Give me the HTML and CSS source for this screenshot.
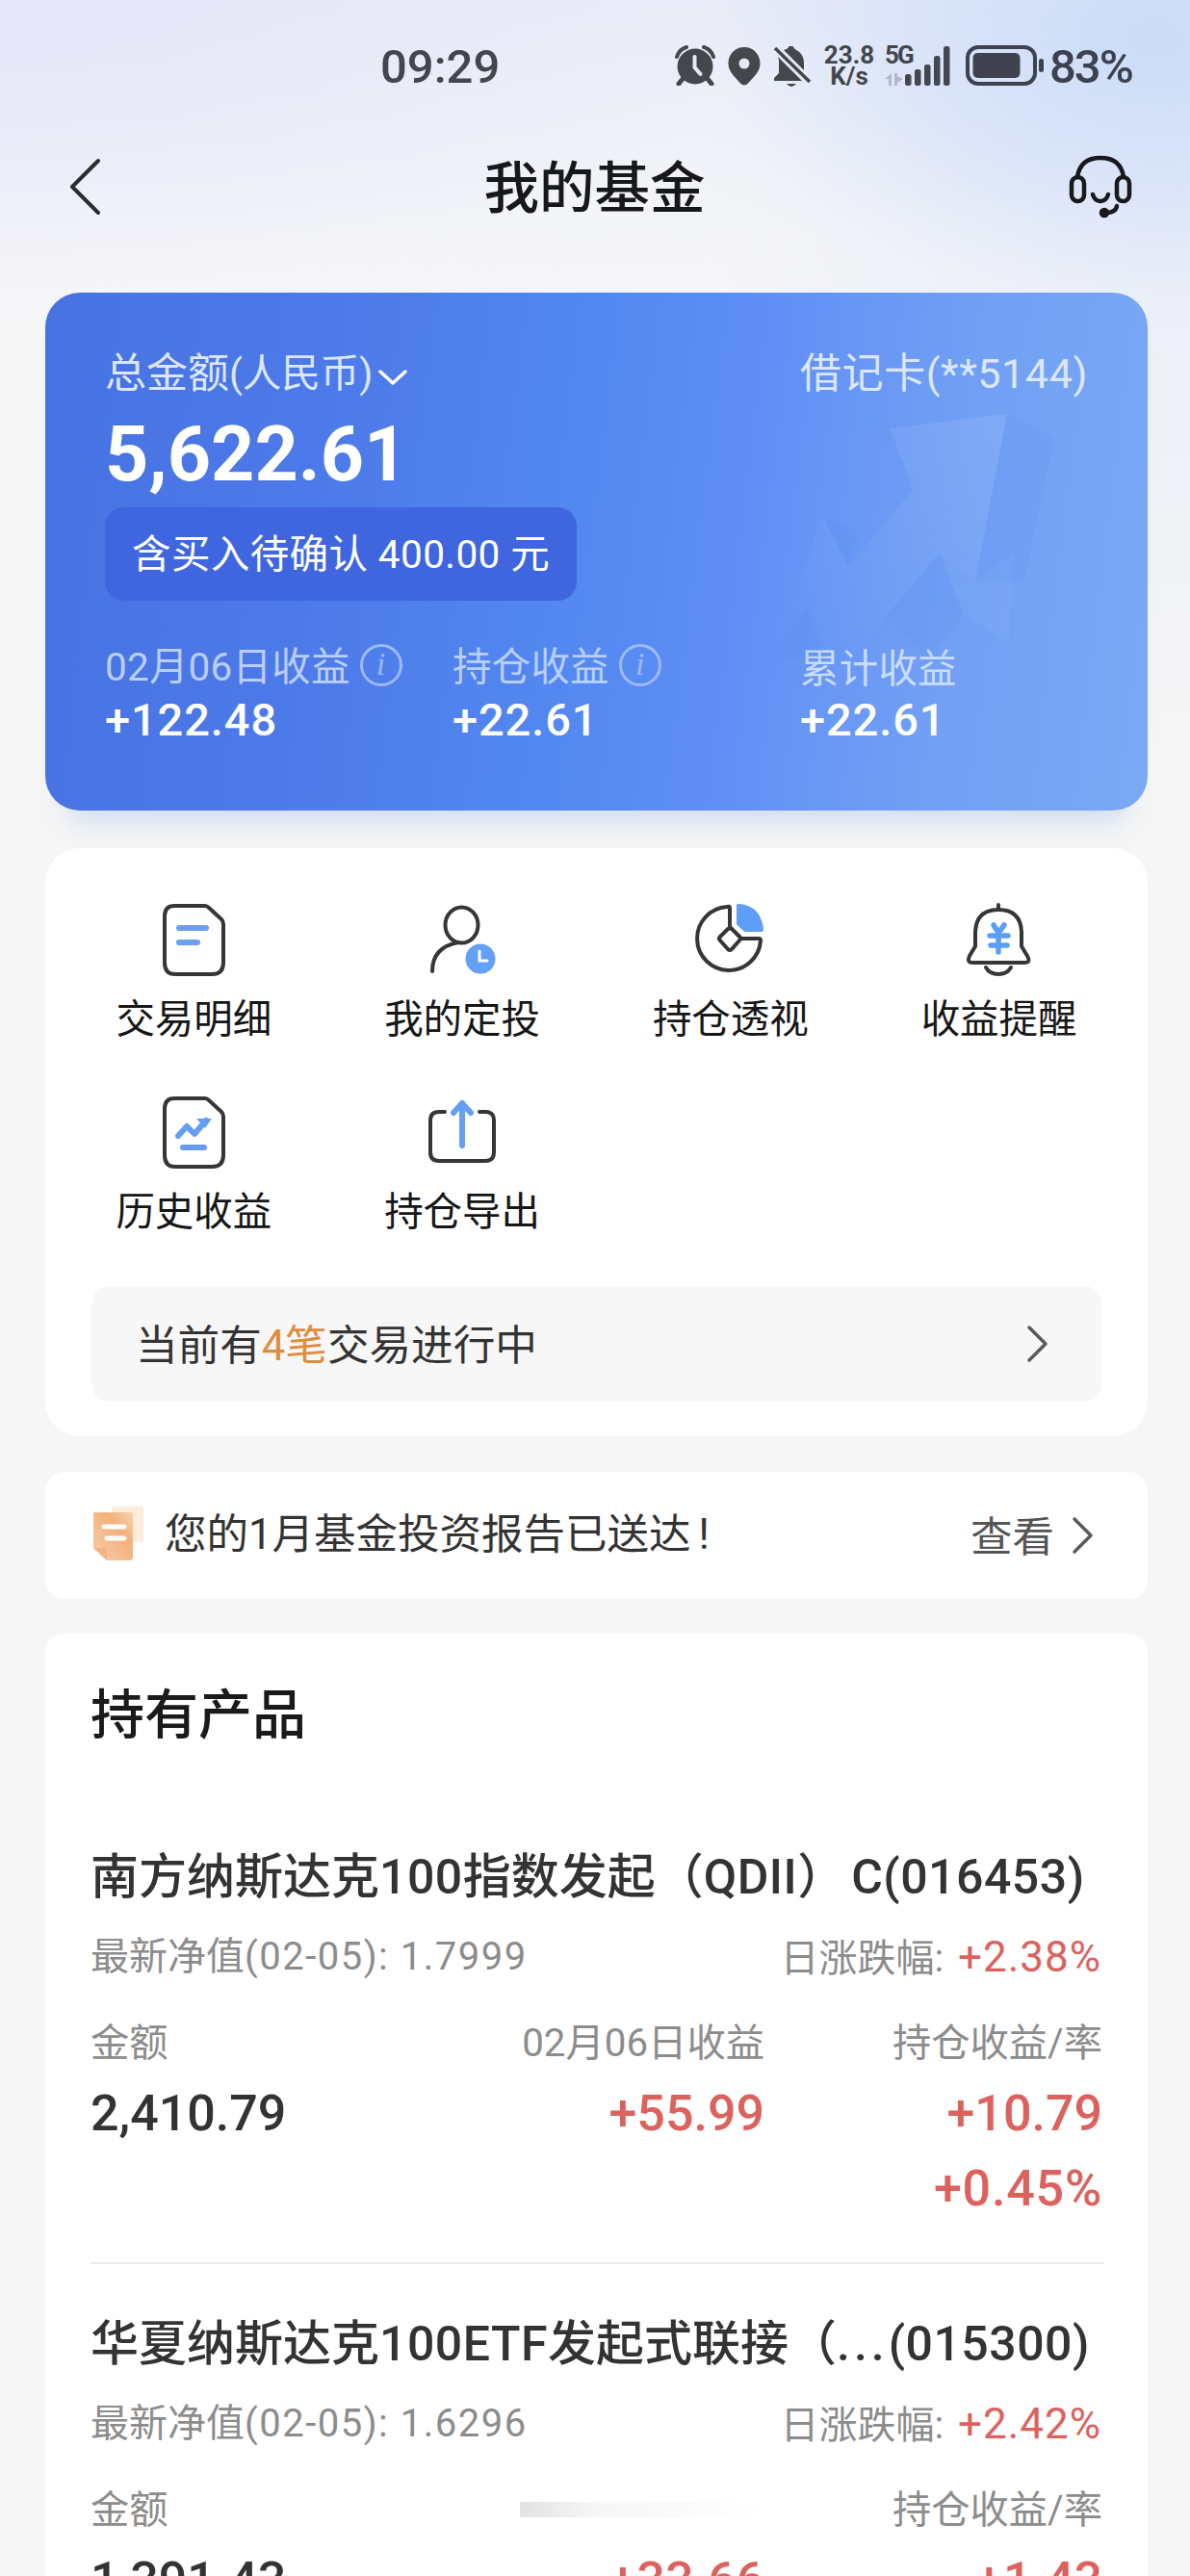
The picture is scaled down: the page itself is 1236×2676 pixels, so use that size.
FILE: index.html
```html
<!DOCTYPE html>
<html lang="zh-CN">
<head>
  <meta charset="UTF-8" />
  <meta name="viewport" content="width=device-width, initial-scale=1.0"/>
  <title>我的基金</title>
  <link rel="stylesheet" href="styles.css">
</head>
<body>
  <div class="status-bar">
    <span class="time">09:29</span>
    <div class="status-icons">
      <svg class="alarm" width="42" height="42" viewBox="0 0 42 42">
        <circle cx="21" cy="22" r="18.5" fill="#44474b"/>
        <path d="M2 12A15 15 0 0 1 12 2M30 2A15 15 0 0 1 40 12" fill="none" stroke="#44474b" stroke-width="4" stroke-linecap="round"/>
        <path d="M8 35l-4 5M34 35l4 5" stroke="#44474b" stroke-width="5" stroke-linecap="round"/>
        <path d="M20.5 12v11l6 7" fill="none" stroke="#e8ebf7" stroke-width="4" stroke-linecap="round"/>
      </svg>
      <svg class="pin" width="34" height="40" viewBox="0 0 34 40">
        <path d="M17 0C7.500 0 .5 7.500 .5 17c0 9 8 15 12.500 20.500q4 4 8 0C25.500 32 33.500 26 33.500 17 33.500 7.500 26.500 0 17 0z" fill="#44474b"/>
        <circle cx="17" cy="17" r="5.500" fill="#e4e9f7"/>
      </svg>
      <svg class="mute" width="40" height="44" viewBox="0 0 40 44">
        <path d="M14 4q2-1 2.500-3h4Q21 3 24 5c6 3 8 8 8 14v7L11 5zM5 12l25 25H1v-3l5-5V16zM14 40h10q-5 6-10 0z" fill="#44474b"/>
        <path d="M2 3l36 35" stroke="#44474b" stroke-width="3.500"/>
      </svg>
      <div class="speed"><span>23.8</span><span>K/s</span></div>
      <div class="signal">
        <span class="net">5G</span>
        <svg width="70" height="44" viewBox="0 0 70 44">
          <path d="M7 29v13H4v-7H0zM10 29v13h3v-3l6-4-6-3v-3z" fill="#b3b9c8"/>
          <g fill="#43474f">
            <rect x="21" y="30" width="6.500" height="12" rx="2.500"/>
            <rect x="31" y="25" width="6.500" height="17" rx="2.500"/>
            <rect x="41" y="20" width="6.500" height="22" rx="2.500"/>
            <rect x="51" y="11" width="6.500" height="31" rx="2.500"/>
            <rect x="61" y="1" width="6.500" height="41" rx="2.500"/>
          </g>
        </svg>
      </div>
      <svg class="battery" width="82" height="42" viewBox="0 0 82 42">
        <rect x="2" y="2" width="70" height="38" rx="11" fill="none" stroke="#3c4250" stroke-width="4"/>
        <rect x="7.500" y="8" width="49" height="26" rx="5" fill="#40434f"/>
        <rect x="76" y="14" width="5" height="14" rx="2.500" fill="#3c4250"/>
      </svg>
      <span class="percent">83%</span>
    </div>
  </div>

  <header>
    <svg width="34" height="60" viewBox="0 0 34 60"><path d="M31 3L4 30l27 27" fill="none" stroke="#2b2c2e" stroke-width="4" stroke-linecap="round" stroke-linejoin="round"/></svg>
    <h1>我的基金</h1>
    <svg width="66" height="66" viewBox="0 0 66 66" fill="none" stroke="#17191d" stroke-width="4.500" stroke-linecap="round">
      <path d="M9 23C11 9 20 3 33 3s22 6 24 20"/>
      <rect x="3" y="23" width="13" height="25" rx="6.500"/>
      <rect x="50" y="23" width="13" height="25" rx="6.500"/>
      <path d="M25 41q2 7 8 7t8-7M50 53q-1 7-12 7"/>
      <circle cx="37" cy="60" r="3" fill="#17191d"/>
    </svg>
  </header>

  <section class="asset-card">
    <svg class="watermark" width="1145" height="538" viewBox="0 0 1145 538">
      <defs>
        <linearGradient id="face" x1="1" y1="0" x2="0.200" y2="1">
          <stop offset="0" stop-color="#fff" stop-opacity=".1"/>
          <stop offset="1" stop-color="#fff" stop-opacity="0"/>
        </linearGradient>
      </defs>
      <path d="M877 141l122-15-33 174-37-30-55 66-40 50-43-58-30 43 46-139 27 52 68-80z" fill="url(#face)"/>
      <path d="M929 270l37 30 40-30-5 93-47-28z" fill="#fff" opacity=".04"/>
      <path d="M999 126l49 25-32 150-50-1zM808 232l38 18-12 34zM929 270l25 65-36 45-45-44zM791 328l20 54-55-3z" fill="#4b80ea" opacity=".09"/>
    </svg>
    <div class="asset-top">
      <span class="asset-title">总金额<small>(人民币)</small>
        <svg width="32" height="20" viewBox="0 0 32 20"><path d="M3 4l13 12L29 4" fill="none" stroke="#fff" stroke-width="3.500" stroke-linecap="round" stroke-linejoin="round"/></svg>
      </span>
      <span class="bank-card">借记卡(**5144)</span>
    </div>
    <div class="total">5,622.61</div>
    <div class="pending">含买入待确认 400.00 元</div>
    <div class="profits">
      <div class="profit">
        <span class="profit-label">02月06日收益<i class="info">i</i></span>
        <b>+122.48</b>
      </div>
      <div class="profit">
        <span class="profit-label">持仓收益<i class="info">i</i></span>
        <b>+22.61</b>
      </div>
      <div class="profit">
        <span class="profit-label low">累计收益</span>
        <b>+22.61</b>
      </div>
    </div>
  </section>

  <section class="menu-card">
    <div class="menu">
      <div class="menu-item">
        <svg width="80" height="80" viewBox="0 0 80 80" fill="none" stroke-linecap="round" stroke-linejoin="round">
          <path d="M20 5h32q2 0 4 2l13 12q2 2 2 5v40q0 12-12 12H21Q10 76 10 64V16Q10 5 20 5z" stroke="#363636" stroke-width="4"/>
          <path d="M25 28h28M25 43h19" stroke="#6c9ff0" stroke-width="6"/>
        </svg>
        <span>交易明细</span>
      </div>
      <div class="menu-item">
        <svg width="80" height="80" viewBox="0 0 80 80" fill="none" stroke="#363636" stroke-width="4" stroke-linecap="round">
          <ellipse cx="39.500" cy="25" rx="17" ry="18.500"/>
          <path d="M36 43Q9 48 9 73"/>
          <circle cx="59" cy="60" r="15.500" fill="#64a0f5" stroke="none"/>
          <path d="M58 52v10h8" stroke="#fff" stroke-width="3"/>
        </svg>
        <span>我的定投</span>
      </div>
      <div class="menu-item">
        <svg width="80" height="80" viewBox="0 0 80 80" fill="none" stroke="#363636" stroke-width="4" stroke-linejoin="round">
          <path d="M39 7q0-2-3-1A33 33 0 1 0 71 41q0-2-2-2H51L39 27z"/>
          <path d="M37 29q2-1 4 0l8 8q2 2 0 4l-8 9q-2 2-4 0l-8-9q-2-2 0-4z" fill="#fff"/>
          <path d="M46 4q0-1 3-1 22 2 25 26 0 3-2 3H56q-3 0-10-8z" fill="#5c9ef8" stroke="none"/>
        </svg>
        <span>持仓透视</span>
      </div>
      <div class="menu-item">
        <svg width="80" height="80" viewBox="0 0 80 80" fill="none" stroke="#363636" stroke-width="4" stroke-linecap="round" stroke-linejoin="round">
          <path d="M39 4v5M15 32q1-23 24-23t24 23v15l6 10q4 7-3 7H12q-6 0-3-7l6-10zM26 69q4 7 13 7t13-7"/>
          <path d="M34 25l5 8 6-8M30 36h19M31 46h17M39 35v18" stroke="#5b9ef6" stroke-width="5.500"/>
        </svg>
        <span>收益提醒</span>
      </div>
      <div class="menu-item">
        <svg width="80" height="80" viewBox="0 0 80 80" fill="none" stroke-linecap="round" stroke-linejoin="round">
          <path d="M20 5h32q2 0 4 2l13 12q2 2 2 5v40q0 12-12 12H21Q10 76 10 64V16Q10 5 20 5z" stroke="#363636" stroke-width="4"/>
          <path d="M24 44l9-10 8 8 12-14M29 56h22" stroke="#659df2" stroke-width="6"/>
          <path d="M43 26h16L52 36z" fill="#659df2"/>
        </svg>
        <span>历史收益</span>
      </div>
      <div class="menu-item">
        <svg width="80" height="80" viewBox="0 0 80 80" fill="none" stroke="#363636" stroke-width="4" stroke-linecap="round" stroke-linejoin="round">
          <path d="M22 19h-6q-9 0-9 9v33q0 9 9 9h48q9 0 9-9V28q0-9-9-9h-6"/>
          <path d="M40 54V10M31 20l9-10 9 10" stroke="#659ff3" stroke-width="6"/>
        </svg>
        <span>持仓导出</span>
      </div>
    </div>
    <div class="notice">
      <span class="notice-text">当前有<em>4笔</em>交易进行中</span>
      <svg class="arrow" width="24" height="40" viewBox="0 0 24 40"><path d="M3 3l17 17L3 37"/></svg>
    </div>
  </section>

  <section class="report-card">
    <svg class="report-icon" width="56" height="60" viewBox="0 0 56 60">
      <defs>
        <linearGradient id="sheet" x1="0" y1="1" x2="1" y2="0">
          <stop offset="0" stop-color="#f8cda8"/>
          <stop offset=".65" stop-color="#f3b27c"/>
          <stop offset="1" stop-color="#f8d2b0"/>
        </linearGradient>
      </defs>
      <rect x="21" y="3" width="33" height="37" rx="3" fill="#fdebdc"/>
      <path d="M4 9h36q3 0 3 3v43q0 4-3 4H16L2 46V11q0-2 2-2z" fill="url(#sheet)"/>
      <path d="M2 46h10q4 0 4 4v9z" fill="#f2b583"/>
      <path d="M13 24h21M16 36h18" stroke="#fff" stroke-width="5" stroke-linecap="round"/>
    </svg>
    <span class="report-text">您的1月基金投资报告已送达<span class="bang">!</span></span>
    <span class="view">查看</span>
    <svg class="arrow" width="24" height="40" viewBox="0 0 24 40"><path d="M3 3l17 17L3 37"/></svg>
  </section>

  <section class="holdings">
    <h2>持有产品</h2>

    <article class="fund">
      <h3>南方纳斯达克<span class="wide">100</span>指数发起（<span class="wide">QDII</span>）<span class="code">C(016453)</span></h3>
      <div class="fund-meta">
        <span>最新净值<span class="nav">(02-05): 1.7999</span></span>
        <span>日涨跌幅<span class="nav">: </span><b class="up">+2.38%</b></span>
      </div>
      <div class="fund-grid labels">
        <span>金额</span><span>02月06日收益</span><span>持仓收益/率</span>
      </div>
      <div class="fund-grid values">
        <span>2,410.79</span><span class="up">+55.99</span><span class="up">+10.79<br><span class="rate">+0.45%</span></span>
      </div>
    </article>

    <article class="fund">
      <h3>华夏纳斯达克<span class="wide">100ETF</span>发起式联接（<span class="dots">...</span><span class="wide">(015300)</span></h3>
      <div class="fund-meta">
        <span>最新净值<span class="nav">(02-05): 1.6296</span></span>
        <span>日涨跌幅<span class="nav">: </span><b class="up">+2.42%</b></span>
      </div>
      <div class="fund-grid labels">
        <span>金额</span><span class="faded"></span><span>持仓收益/率</span>
      </div>
      <div class="fund-grid values">
        <span>1,391.43</span><span class="up">+33.66</span><span class="up">+1.43</span>
      </div>
    </article>
  </section>
</body>
</html>
```

FILE: styles.css
```css
* {
  box-sizing: border-box;
}

body {
  margin: 0;
  width: 1236px;
  height: 2676px;
  overflow: hidden;
  font-family: Roboto, "Noto Sans CJK SC", sans-serif;
  color: #333;
  background:
    radial-gradient(ellipse 460px 280px at 1200px 40px, #cbdcf8 0%, rgba(203, 220, 248, 0) 100%),
    radial-gradient(ellipse 500px 700px at 1236px 100px, rgba(226, 232, 250, 0.7) 0%, rgba(226, 233, 250, 0) 100%),
    radial-gradient(ellipse 800px 300px at 0 0, #e5e6f9 0%, rgba(229, 230, 249, 0) 100%),
    linear-gradient(#e9ecf8 0, #f4f5f8 240px, #f6f6f6 420px);
}

svg {
  flex: none;
  display: block;
}

/* status bar */
.status-bar {
  display: flex;
  justify-content: space-between;
  height: 134px;
  padding: 0 58px 0 395px;
  color: #43464c;
}

.time, .percent {
  font-size: 49px;
  font-weight: 500;
  line-height: 60px;
  margin-top: 40px;
}

.percent {
  color: #3c4250;
  margin-left: 5px;
  width: 88px;
  letter-spacing: -2px;
}

.status-icons {
  display: flex;
}

.alarm { margin-top: 47px; }
.pin { margin: 49px 0 0 13px; }
.mute { margin: 47px 0 0 13px; }

.speed {
  display: flex;
  flex-direction: column;
  align-items: center;
  width: 56px;
  margin: 46px 0 0 11px;
  font-size: 26px;
  font-weight: 700;
  line-height: 22px;
}

.signal {
  position: relative;
  width: 70px;
  margin: 47px 0 0 9px;
}

.net {
  position: absolute;
  left: 0;
  top: -1px;
  font-size: 26px;
  font-weight: 700;
  line-height: 22px;
  letter-spacing: -2px;
}

.battery {
  margin: 47px 0 0 14px;
}

/* page header */
header {
  display: flex;
  justify-content: space-between;
  align-items: center;
  height: 120px;
  padding: 0 60px 0 71px;
}

h1 {
  margin: -7px 0 0 20px;
  font-size: 57.5px;
  font-weight: 500;
  color: #17181a;
}

/* blue card */
.asset-card {
  position: relative;
  width: 1145px;
  height: 538px;
  margin: 50px 0 0 47px;
  padding: 54px 62px 0;
  border-radius: 36px;
  color: #fff;
  background: linear-gradient(97deg, #4672e2 0%, #4c78e8 22%, #5288f0 48%, #5f8ff6 62%, #719ff4 80%, #7aa9f5 100%);
  box-shadow: 0 34px 30px -24px rgba(150, 185, 240, 0.45);
}

.watermark {
  position: absolute;
  left: 0;
  top: 0;
}

.asset-top {
  display: flex;
  justify-content: space-between;
  line-height: 60px;
  height: 60px;
  color: #dce7fd;
  font-size: 43px;
}

.asset-title {
  display: flex;
  align-items: center;
}

.asset-title small {
  font-size: 40.5px;
}

.asset-title svg {
  margin: 8px 0 0 5px;
}

.bank-card {
  letter-spacing: 0.6px;
}

.total {
  margin-top: 14px;
  font-size: 79px;
  font-weight: 700;
  line-height: 80px;
}

.pending {
  width: 490px;
  height: 97px;
  margin-top: 15px;
  padding-left: 28px;
  border-radius: 20px;
  background: #3f66df;
  font-size: 40.5px;
  line-height: 99px;
  letter-spacing: 0.4px;
  white-space: nowrap;
}

.profits {
  display: flex;
  margin-top: 36px;
}

.profit {
  flex: none;
  width: 361px;
}

.profit-label {
  display: flex;
  align-items: center;
  height: 58px;
  font-size: 40.5px;
  letter-spacing: 0.2px;
  color: #b9cffa;
}

.profit-label.low {
  padding-top: 5px;
  color: #c9dcfb;
}

.profit b {
  display: block;
  margin-top: 2px;
  font-size: 47px;
  font-weight: 500;
  line-height: 56px;
  letter-spacing: 0.9px;
}

.info {
  width: 44px;
  height: 44px;
  margin: 4px 0 0 10px;
  border: 3px solid #9dbbf8;
  border-radius: 50%;
  color: #9dbbf8;
  font-family: "Liberation Serif", serif;
  font-size: 34px;
  line-height: 36px;
  text-align: center;
}

/* shortcuts */
.menu-card {
  width: 1145px;
  height: 611px;
  margin: 39px 0 0 47px;
  padding: 55px 15px 0;
  border-radius: 36px;
  background: #fff;
  position: relative;
}

.menu {
  display: grid;
  grid-template-columns: repeat(4, 1fr);
  grid-auto-rows: 200px;
}

.menu-item {
  display: flex;
  flex-direction: column;
  align-items: center;
  font-size: 40.5px;
  line-height: 56px;
  color: #161616;
}

.menu-item span {
  margin-top: 15px;
}

.notice {
  display: flex;
  justify-content: space-between;
  align-items: center;
  height: 120px;
  margin: 0 33px;
  padding: 0 54px 0 46px;
  border-radius: 18px;
  background: #f7f7f7;
  font-size: 43.6px;
}

.notice-text {
  margin-top: -5px;
}

.notice em {
  font-style: normal;
  color: #e08c3e;
}

.arrow path {
  fill: none;
  stroke: #5a5a5a;
  stroke-width: 3.5;
  stroke-linecap: round;
  stroke-linejoin: round;
}

/* report banner */
.report-card {
  display: flex;
  align-items: center;
  width: 1145px;
  height: 132px;
  margin: 37px 0 0 47px;
  padding: 0 55px 0 48px;
  border-radius: 20px;
  background: #fff;
  font-size: 43.5px;
}

.report-icon {
  margin-top: -6px;
}

.report-text {
  flex: 1;
  margin-left: 20px;
  margin-top: -9px;
}

.bang {
  margin-left: 8px;
}

.view {
  color: #555;
  margin: -4px 18px 0 0;
}

/* holdings list */
.holdings {
  width: 1145px;
  height: 979px;
  margin: 36px 0 0 47px;
  padding: 50px 46px 0 47px;
  border-radius: 20px 20px 0 0;
  background: #fff;
  overflow: hidden;
}

h2 {
  margin: 0 0 103px;
  font-size: 56px;
  font-weight: 500;
  line-height: 70px;
  color: #1a1a1a;
}

.fund {
  height: 432px;
  margin-bottom: 53px;
  border-bottom: 2px solid #ebebeb;
}

h3 {
  margin: 0;
  font-size: 50px;
  font-weight: 500;
  line-height: 60px;
  white-space: nowrap;
}

.wide {
  letter-spacing: 0.5px;
}

.dots {
  letter-spacing: 4px;
}

.code {
  margin-left: 6px;
  letter-spacing: 0.5px;
}

.fund-meta {
  display: flex;
  justify-content: space-between;
  margin-top: 28px;
  padding-right: 2px;
  font-size: 40px;
  line-height: 50px;
  color: #8c8c8c;
  white-space: nowrap;
}

.nav {
  letter-spacing: 1.5px;
}

.fund-meta b {
  font-size: 44px;
  font-weight: 400;
  letter-spacing: 1px;
  margin-left: 2px;
}

.fund-grid {
  display: grid;
  grid-template-columns: 300px 400px 1fr;
  padding-right: 1px;
  text-align: right;
}

.fund-grid span:first-child {
  text-align: left;
}

.labels {
  margin-top: 38px;
  font-size: 40.3px;
  line-height: 50px;
  color: #8c8c8c;
}

.values {
  margin-top: 9px;
  font-size: 52px;
  font-weight: 500;
  line-height: 78px;
}

.rate {
  letter-spacing: 0.8px;
}

.up, .fund-grid .up {
  color: #dc625e;
}

.faded {
  width: 254px;
  height: 16px;
  margin: 16px 0 0 146px;
  background: linear-gradient(90deg, #e2e2e2, #f6f6f6 30%, #fff);
}
```
